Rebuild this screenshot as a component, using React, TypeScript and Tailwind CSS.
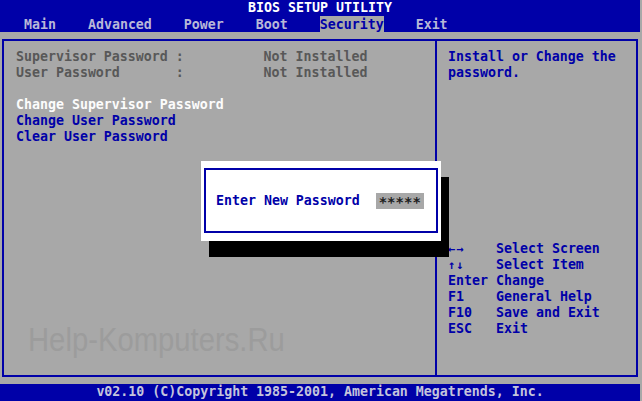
const menu = ["Main", "Advanced", "Power", "Boot", "Security", "Exit"];
const active = "Security";

const keys: [string, string, boolean][] = [
  ["←→", "Select Screen", true],
  ["↑↓", "Select Item", true],
  ["Enter", "Change", false],
  ["F1", "General Help", false],
  ["F10", "Save and Exit", false],
  ["ESC", "Exit", false],
];

export default function App() {
  return (
    <div className="relative w-[642px] h-[401px] overflow-hidden bg-[#a8a8a8] font-['DejaVu_Sans_Mono',monospace] text-[13.288px] leading-[16px] font-bold whitespace-pre">
      <div className="w-[640px] h-full flex flex-col">
        {/* title + menu bar */}
        <header className="h-[32px] bg-[#0000a8]">
          <div className="h-[16px] text-center text-white">BIOS SETUP UTILITY</div>
          <nav className="h-[16px] flex pl-[24px] gap-[32px] text-[#b8b8d8] pt-px">
            {menu.map((m) => (
              <span key={m} className={m === active ? "bg-[#a8a8a8] text-[#0000a8] -mt-px pt-px" : ""}>
                {m}
              </span>
            ))}
          </nav>
        </header>

        {/* framed work area */}
        <main className="h-[352px] pt-[7px] px-[2px]">
          <div className="h-[338px] border-2 border-[#0000a8] flex">
            <section className="w-[431px] pt-[8px] pl-[12px] flex flex-col">
              <div className="h-[16px] text-[#585858]">{"Supervisor Password :          Not Installed"}</div>
              <div className="h-[16px] text-[#585858]">{"User Password       :          Not Installed"}</div>
              <div className="h-[16px]" />
              <div className="h-[16px] text-[#fcfcfc]">Change Supervisor Password</div>
              <div className="h-[16px] text-[#0000a8]">Change User Password</div>
              <div className="h-[16px] text-[#0000a8]">Clear User Password</div>
            </section>
            <aside className="flex-1 border-l-2 border-[#0000a8] pt-[8px] pl-[11px] text-[#0000a8] flex flex-col">
              <div className="h-[16px]">Install or Change the</div>
              <div className="h-[16px]">password.</div>
              <div className="mt-[160px] flex flex-col">
                {keys.map(([k, d, arrow]) => (
                  <div key={d} className="h-[16px] flex">
                    <span className={arrow ? "w-[48px] text-[12px] tracking-[1px]" : "w-[48px]"}>{k}</span>
                    <span>{d}</span>
                  </div>
                ))}
              </div>
            </aside>
          </div>
        </main>

        {/* copyright bar */}
        <footer className="h-[17px] bg-[#0000a8] text-center text-[#c4c4dc]">
          v02.10 (C)Copyright 1985-2001, American Megatrends, Inc.
        </footer>
      </div>

      {/* watermark over the left panel */}
      <div className="absolute left-[28px] top-[323px] origin-left scale-x-[0.873] font-['Liberation_Sans',sans-serif] font-normal text-[33.5px] leading-none text-[#9c9c9c]">
        Help-Komputers.Ru
      </div>

      {/* password dialog */}
      <div className="absolute left-[201px] top-[161px] w-[240px] h-[80px] bg-white shadow-[8px_16px_0_0_#000] pt-[7px] px-[3px] pb-[8px] flex">
        <div className="flex-1 border-2 border-[#0000a8] flex items-center pl-[10px] gap-[16px]">
          <span className="text-[#0000a8] pt-px">Enter New Password</span>
          <span className="w-[48px] h-[16px] bg-[#a8a8a8] text-center text-[14px] text-[#202020] pt-px">*****</span>
        </div>
      </div>
    </div>
  );
}
